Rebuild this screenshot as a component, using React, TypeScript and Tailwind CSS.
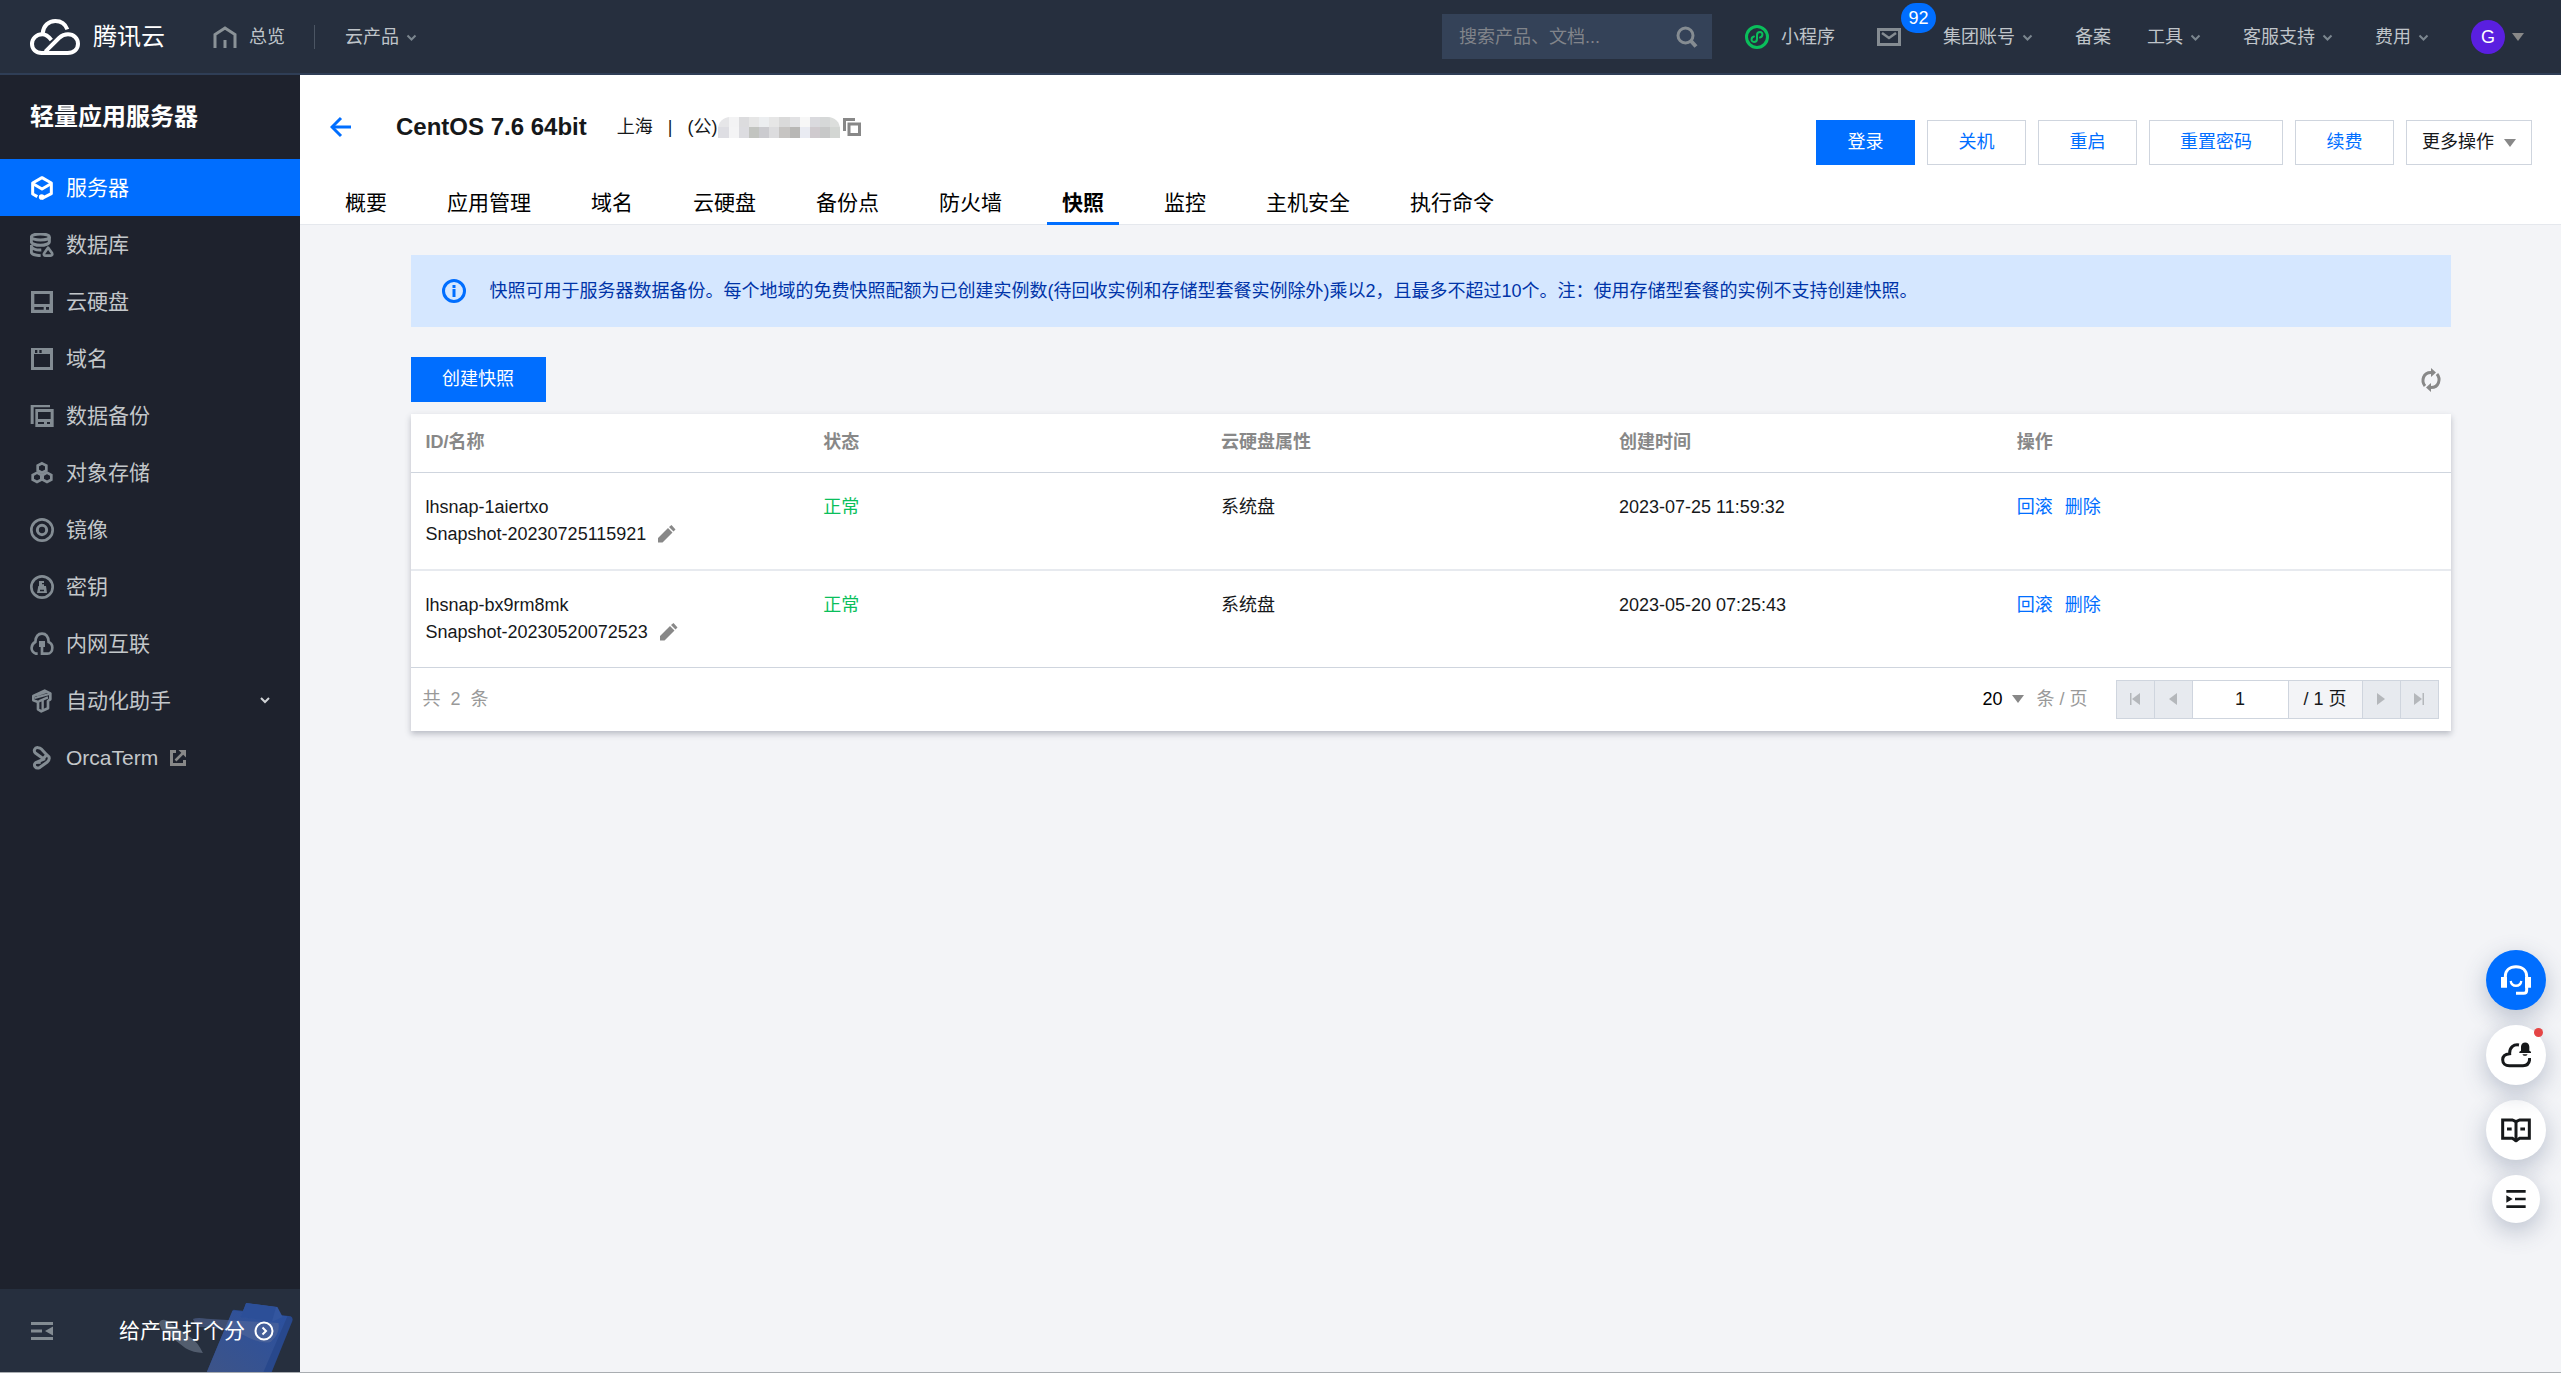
import React, { useState } from "react";

const BLUE = "#006eff";

function Chevron() {
  return (
    <svg width="24" height="24" viewBox="0 0 24 24" fill="none" stroke="#7b868f" strokeWidth="2" aria-hidden="true">
      <path d="M8.500 10.500 L12.500 14.500 L16.500 10.500" />
    </svg>
  );
}

function Triangle({ size = 12 }: { size?: number }) {
  return (
    <svg width={size} height="8" viewBox="0 0 12 8" aria-hidden="true">
      <path d="M0 0H12L6 8Z" fill="#888" />
    </svg>
  );
}

function CloudLogo() {
  return (
    <svg width="50" height="36" viewBox="0 0 150 108" fill="none" stroke="#fff" strokeWidth="12" aria-hidden="true">
      <path d="M38 43C40 20 56 6 76 6C93 6 106 15 112 31" />
      <path d="M64 63C56 53 48 46 37 46C19 46 6 59 6 75C6 91 18 102 35 102H113C131 102 144 91 144 74C144 58 131 46 114 46C103 46 95 50 87 57L46 98" />
    </svg>
  );
}

const icons: Record<string, React.ReactNode> = {
  server: (
    <g fill="none" stroke="currentColor" strokeWidth="9" strokeLinejoin="round">
      <path d="M22 62L8 54V21L36 5L64 21V53L36 67" />
      <path d="M9 23L36 39L63 23" />
      <circle cx="35" cy="63" r="5" fill="currentColor" strokeWidth="7" />
    </g>
  ),
  database: (
    <g fill="none" stroke="currentColor" strokeWidth="9">
      <ellipse cx="31" cy="12" rx="27" ry="9" />
      <path d="M4 12V26C4 32 16 37 31 37S58 32 58 26V12" />
      <path d="M4 36V58C4 63 14 67 32 68M5 42C10 49 20 52 34 51" />
      <path d="M54 44L66 60C68 65 66 68 62 68H47C42 68 40 64 43 60Z" strokeWidth="8" strokeLinejoin="round" />
    </g>
  ),
  disk: (
    <g fill="currentColor">
      <path fillRule="evenodd" d="M3 3H69V69H3ZM13 12V42H59V12ZM13 51V59H41V51ZM48 51V59H57V51Z" />
    </g>
  ),
  domain: (
    <path fill="currentColor" fillRule="evenodd" d="M3 3H69V69H3ZM12 21V60H60V21ZM15 9V18H22V9ZM28 9V18H35V9Z" />
  ),
  backup: (
    <g fill="currentColor">
      <path d="M2 3H60V10H11V60H2Z" />
      <path fillRule="evenodd" d="M16 15H71V69H16ZM24 24V45H62V24ZM24 54V60H42V54ZM51 54V60H60V54Z" />
    </g>
  ),
  storage: (
    <g fill="none" stroke="currentColor" strokeWidth="8">
      <path d="M36 7L49 14V28L36 35L23 28V14Z" />
      <path d="M21 35L34 42V56L21 63L8 56V42Z" />
      <path d="M51 35L64 42V56L51 63L38 56V42Z" />
    </g>
  ),
  image: (
    <g fill="none" stroke="currentColor">
      <circle cx="36" cy="36" r="32" strokeWidth="8" />
      <circle cx="36" cy="36" r="14" strokeWidth="9" />
    </g>
  ),
  key: (
    <g>
      <circle cx="36" cy="36" r="32" fill="none" stroke="currentColor" strokeWidth="8" />
      <path fill="currentColor" fillRule="evenodd" d="M27 18H42V24H36V28H42V33H48L51 54H21L25 33H27ZM30 44V49H42V44Z" />
    </g>
  ),
  network: (
    <g fill="none" stroke="currentColor" strokeWidth="8">
      <path d="M23 65H18C9 62 4 55 5 46C6 38 10 33 16 30C17 14 25 5 36 5S55 14 56 30C63 33 67 39 67 47C67 57 61 65 52 65H36V42" />
      <path d="M27 27H45V45H27Z" fill="currentColor" stroke="none" />
    </g>
  ),
  assistant: (
    <g fill="none" stroke="currentColor" strokeWidth="8" strokeLinejoin="round">
      <path d="M10 21L44 5L61 13V31L54 36V58L34 67L24 61V39L10 34Z" />
      <path d="M14 27L58 15M20 19L50 9" strokeWidth="6" />
      <path d="M26 37L54 25M38 34V62" strokeWidth="7" />
    </g>
  ),
  orca: (
    <g fill="none" stroke="currentColor" strokeWidth="9" strokeLinejoin="round">
      <path d="M25 5C14 3 9 15 17 22L40 38L50 26L34 9C31 6 28 5 25 5Z" />
      <path d="M50 26C60 32 60 40 52 48L30 64C17 71 8 57 17 50L45 38" />
      <path d="M18 50H32" strokeWidth="7" />
    </g>
  ),
};

const menu = [
  ["server", "服务器"],
  ["database", "数据库"],
  ["disk", "云硬盘"],
  ["domain", "域名"],
  ["backup", "数据备份"],
  ["storage", "对象存储"],
  ["image", "镜像"],
  ["key", "密钥"],
  ["network", "内网互联"],
  ["assistant", "自动化助手"],
  ["orca", "OrcaTerm"],
];

function TopBar() {
  return (
    <header className="flex h-[75px] shrink-0 items-center border-b-2 border-[#2f3e56] bg-[#262f3e] text-[18px] leading-6 text-[#bfc4c9]">
      <a href="#home" className="ml-[30px] flex items-center gap-[13px] text-2xl text-white">
        <CloudLogo />
        腾讯云
      </a>
      <a href="#overview" className="ml-12 flex items-center gap-3">
        <svg width="24" height="24" viewBox="0 0 24 24" fill="none" stroke="#8a9297" strokeWidth="3" aria-hidden="true">
          <path d="M2 23V9.500L12 3L22 9.500V23" />
          <path d="M12 15V23" />
        </svg>
        总览
      </a>
      <span className="ml-[29px] h-6 w-px bg-[#4b5563]" />
      <button className="ml-[30px] flex items-center">
        云产品
        <Chevron />
      </button>

      <label className="ml-auto flex h-[45px] w-[270px] items-center bg-[#344258] pr-3.5 pl-[17px]">
        <input
          type="search"
          aria-label="搜索产品、文档"
          placeholder="搜索产品、文档..."
          className="min-w-0 flex-1 bg-transparent outline-none placeholder:text-[#81848a]"
        />
        <svg width="22" height="22" viewBox="0 0 22 22" fill="none" stroke="#858c92" aria-hidden="true">
          <circle cx="9.500" cy="9.500" r="7.500" strokeWidth="3" />
          <path d="M15 15L20 20.500" strokeWidth="4" />
        </svg>
      </label>
      <a href="#mini" className="ml-[33px] flex items-center gap-3">
        <svg width="24" height="24" viewBox="0 0 24 24" fill="none" stroke="#0abf5b" aria-hidden="true">
          <circle cx="12" cy="12" r="10.500" strokeWidth="3" />
          <path
            d="M9 11.500C6 12 5.500 17 9 17C11 17 12 15.500 12 14V10C12 8.500 13 7 15 7C18.500 7 18 12 15 12.500"
            strokeWidth="2"
            strokeLinecap="round"
          />
        </svg>
        小程序
      </a>
      <a href="#messages" aria-label="消息" className="relative ml-[42px]">
        <svg width="24" height="18" viewBox="0 0 24 18" fill="none" stroke="#858c92" strokeWidth="3" aria-hidden="true">
          <path d="M1.500 1.500H22.500V16.500H1.500Z" />
          <path d="M5 5L12 10L19 5" strokeWidth="2.500" />
        </svg>
        <span className="absolute -top-[25px] left-6 flex h-[30px] w-[35px] items-center justify-center rounded-full bg-[#006eff] text-white">
          92
        </span>
      </a>
      <nav className="ml-[42px] flex items-center gap-9">
        <button className="flex items-center">集团账号<Chevron /></button>
        <a href="#beian">备案</a>
        <button className="flex items-center">工具<Chevron /></button>
        <button className="flex items-center">客服支持<Chevron /></button>
        <button className="flex items-center">费用<Chevron /></button>
        <button className="mr-[37px] flex items-center gap-[7px]">
          <span className="flex size-[34px] items-center justify-center rounded-full bg-[#5a1fe0] text-white">G</span>
          <Triangle />
        </button>
      </nav>
    </header>
  );
}

function Sidebar() {
  return (
    <aside className="flex w-[300px] shrink-0 flex-col bg-[#1e222d]">
      <h2 className="flex h-[84px] items-center pl-[30px] text-2xl font-bold text-white">轻量应用服务器</h2>
      <nav>
        {menu.map(([icon, label], i) => (
          <a
            key={icon}
            href={"#" + icon}
            className={
              "flex h-[57px] items-center pl-[30px] text-[21px] leading-8 " +
              (i === 0 ? "bg-[#006eff] text-white" : "text-[#c3c7ca]")
            }
          >
            <svg
              width="24"
              height="24"
              viewBox="0 0 72 72"
              aria-hidden="true"
              className={i === 0 ? "mr-3 text-white" : "mr-3 text-[#838c93]"}
            >
              {icons[icon]}
            </svg>
            {label}
            {icon === "assistant" && (
              <svg width="12" height="10" viewBox="0 0 12 10" fill="none" stroke="#d0d3d6" strokeWidth="2" className="mr-[29px] ml-auto" aria-hidden="true">
                <path d="M2 2L6 6L10 2" />
              </svg>
            )}
            {icon === "orca" && (
              <svg width="16" height="16" viewBox="0 0 16 16" fill="none" stroke="#888" strokeWidth="3" className="ml-3" aria-hidden="true">
                <path d="M6 1.500H1.500V14.500H14.500V10" />
                <path d="M5.500 10.500L13 3" strokeWidth="2.500" />
                <path d="M8.500 0H16V7.500Z" fill="#888" stroke="none" />
              </svg>
            )}
          </a>
        ))}
      </nav>
      <div className="relative mt-auto flex h-[83px] items-center bg-[#262f3e] pl-[31px]">
        <svg width="143" height="83" viewBox="470 58 430 249" className="absolute right-0 bottom-0" aria-hidden="true">
          <defs>
            <linearGradient id="board" x1="0" y1="1" x2="1" y2="0">
              <stop offset="0" stopColor="#3d5488" />
              <stop offset="1" stopColor="#2a50a0" />
            </linearGradient>
          </defs>
          <path d="M476 160Q484 144 502 154L572 204Q592 216 608 250Q580 250 556 236L484 180Z" fill="#525d6e" />
          <path d="M700 120L872 140Q880 144 877 154L815 307H620L660 210Z" fill="#28488c" />
          <path d="M697 122L862 140L790 307H620Z" fill="url(#board)" />
          <path d="M738 100L832 112L848 142L820 155L722 142Z" fill="#33569f" />
          <path d="M738 100L828 112L816 154L722 142Z" fill="#2c4f98" />
          <path d="M578 148Q590 142 620 147L835 160Q842 190 812 217Q780 225 730 196Q650 170 590 172Z" fill="#56699a" opacity="0.55" />
        </svg>
        <button aria-label="收起菜单">
          <svg width="22" height="18" viewBox="0 0 22 18" fill="#838c93" aria-hidden="true">
            <path d="M0 0H22V3H0ZM0 15H22V18H0ZM0 7.500H11V10.500H0ZM22 4.500V13.500L14 9Z" />
          </svg>
        </button>
        <a href="#rate" className="relative mr-[26px] ml-auto flex items-center gap-[9px] text-[21px] leading-8 text-white">
          给产品打个分
          <svg width="20" height="20" viewBox="0 0 20 20" fill="none" stroke="#fff" strokeWidth="2" aria-hidden="true">
            <circle cx="10" cy="10" r="8.500" />
            <path d="M8.500 6.500L12 10L8.500 13.500" />
          </svg>
        </a>
      </div>
    </aside>
  );
}

const tabs = ["概要", "应用管理", "域名", "云硬盘", "备份点", "防火墙", "快照", "监控", "主机安全", "执行命令"];

const mosaic = [
  ["#e6e6e8", "#f3f3f4", "#dcdcde", "#e6e6e6", "#eceef0", "#e6e6e6", "#dadada", "#e2e2e4", "#f7f7f7", "#dadade", "#d6d8d8", "#dcdedc"],
  ["#dedee3", "#f4f4f5", "#dcdce0", "#c2c4c0", "#cbcbcf", "#dcdcde", "#c6c4c2", "#b8b7b5", "#e9ebf2", "#cfcace", "#c7c8c8", "#d3d6d3"],
];

function PageHead() {
  const [active, setActive] = useState("快照");
  const outline = "h-[45px] min-w-[99px] border border-[#cfd5de] bg-white px-[30px] text-[#006eff]";
  return (
    <section className="flex h-[150px] items-start justify-between border-b border-[#e5e8ed] bg-white">
      <div className="flex h-[150px] flex-col justify-between pl-[30px]">
        <div className="mt-[34px] flex h-9 items-center">
          <a href="#back" aria-label="返回">
            <svg width="24" height="24" viewBox="0 0 24 24" fill="none" stroke={BLUE} strokeWidth="3" aria-hidden="true">
              <path d="M21 12H2" />
              <path d="M11 3L2 12L11 21" />
            </svg>
          </a>
          <h1 className="ml-[42px] text-2xl font-bold text-[#16181a]">CentOS 7.6 64bit</h1>
          <div className="ml-[30px] flex items-center text-[18px]">
            上海
            <span className="mx-[15px]">|</span>
            (公)
            <span className="ml-px grid h-[21px] w-[122px] grid-cols-12 overflow-hidden rounded-t-xl">
              {mosaic.flat().map((c, i) => (
                <span key={i} style={{ backgroundColor: c }} />
              ))}
            </span>
            <button aria-label="复制" className="ml-[3px]">
              <svg width="18" height="18" viewBox="0 0 18 18" fill="none" stroke="#888" aria-hidden="true">
                <path d="M1.500 13V1.500H12" strokeWidth="3" />
                <path d="M6 6H16.500V16.500H6Z" strokeWidth="3" />
              </svg>
            </button>
          </div>
        </div>
        <nav className="flex gap-[30px] text-[21px] leading-8 text-black">
          {tabs.map((t) => (
            <button
              key={t}
              onClick={() => setActive(t)}
              className={
                "h-[42px] border-b-3 px-[15px] whitespace-nowrap " +
                (t === active ? "border-[#006eff] font-bold" : "border-transparent")
              }
            >
              {t}
            </button>
          ))}
        </nav>
      </div>
      <div className="mt-[45px] mr-[29px] flex gap-3 text-[18px]">
        <button className="h-[45px] min-w-[99px] bg-[#006eff] text-white">登录</button>
        <button className={outline}>关机</button>
        <button className={outline}>重启</button>
        <button className={outline}>重置密码</button>
        <button className={outline}>续费</button>
        <button className="flex h-[45px] items-center gap-2.5 border border-[#cfd5de] bg-white px-[15px]">
          更多操作
          <Triangle />
        </button>
      </div>
    </section>
  );
}

const rows = [
  { id: "lhsnap-1aiertxo", name: "Snapshot-20230725115921", time: "2023-07-25 11:59:32" },
  { id: "lhsnap-bx9rm8mk", name: "Snapshot-20230520072523", time: "2023-05-20 07:25:43" },
];

function PageArrow({ flip, end, label }: { flip?: boolean; end?: boolean; label: string }) {
  return (
    <button aria-label={label} disabled className="flex w-[37px] items-center justify-center bg-[#e7eaef]">
      <svg width="12" height="14" viewBox="0 0 12 14" fill="#b4b7bb" className={flip ? "rotate-180" : ""} aria-hidden="true">
        <path d={end ? "M11 1V13L3 7Z" : "M10 1V13L2 7Z"} />
        {end && <path d="M1 1H2.500V13H1Z" />}
      </svg>
    </button>
  );
}

function SnapshotTable() {
  return (
    <div className="mt-3 bg-white shadow-[0_3px_6px_rgba(54,58,80,0.3)]">
      <table className="w-full table-fixed border-collapse text-left">
        <thead>
          <tr className="h-[58px] border-b border-[#cfd5de] text-[#888]">
            <th className="w-[19.5%] px-[15px] font-bold">ID/名称</th>
            <th className="w-[19.5%] px-[15px] font-bold">状态</th>
            <th className="w-[19.5%] px-[15px] font-bold">云硬盘属性</th>
            <th className="w-[19.5%] px-[15px] font-bold">创建时间</th>
            <th className="px-[15px] font-bold">操作</th>
          </tr>
        </thead>
        <tbody>
          {rows.map((r) => (
            <tr key={r.id} className="border-b-2 border-[#e7eaef] align-top last:border-b last:border-[#cfd5de]">
              <td className="px-[15px] py-[21px]">
                <div>{r.id}</div>
                <div className="flex items-center gap-3">
                  {r.name}
                  <button aria-label="编辑名称">
                    <svg width="18" height="18" viewBox="0 0 18 18" fill="#888" aria-hidden="true">
                      <path d="M0 13L10 3L14.500 7.500L4.500 17.500H0ZM11 2L13.500 0L17.500 4.500L15.500 6.500Z" />
                    </svg>
                  </button>
                </div>
              </td>
              <td className="px-[15px] py-[21px] text-[#0abf5b]">正常</td>
              <td className="px-[15px] py-[21px]">系统盘</td>
              <td className="px-[15px] py-[21px]">{r.time}</td>
              <td className="px-[15px] py-[21px] text-[#006eff]">
                <div className="flex gap-3">
                  <button>回滚</button>
                  <button>删除</button>
                </div>
              </td>
            </tr>
          ))}
        </tbody>
      </table>
      <div className="flex h-[63px] items-center px-3">
        <span className="text-[#999]">共&nbsp; 2 &nbsp;条</span>
        <label className="ml-auto flex items-center text-[#999]">
          <select aria-label="每页条数" defaultValue="20" className="w-[30px] appearance-none bg-transparent text-black outline-none">
            <option>20</option>
          </select>
          <Triangle />
          <span className="ml-3">条 / 页</span>
        </label>
        <div className="ml-7 flex h-[39px] gap-px border border-[#cfd5de] bg-[#cfd5de]">
          <PageArrow label="第一页" end />
          <PageArrow label="上一页" />
          <input aria-label="页码" defaultValue="1" className="w-[95px] bg-white text-center outline-none" />
          <span className="flex w-[73px] items-center justify-center bg-[#f3f4f7]">/ 1 页</span>
          <PageArrow label="下一页" flip />
          <PageArrow label="最后一页" flip end />
        </div>
      </div>
    </div>
  );
}

function FloatingTools() {
  const round = "flex size-[60px] items-center justify-center rounded-full bg-white shadow-[0_8px_24px_rgba(54,72,110,0.3)]";
  return (
    <div className="fixed right-[15px] bottom-[150px] flex flex-col items-center gap-[15px]">
      <button aria-label="在线客服" className="flex size-[60px] items-center justify-center rounded-full bg-[#006eff] shadow-[0_8px_24px_rgba(54,72,110,0.3)]">
        <svg width="30" height="30" viewBox="0 0 90 90" fill="none" stroke="#fff" strokeWidth="9" aria-hidden="true">
          <path d="M13 40V34C13 16 26 5 45 5S77 16 77 34V76C77 82 74 85 68 85H45" />
          <path d="M29 48C32 67 58 67 61 48" strokeWidth="7" />
          <path d="M0 36H18V68H0ZM72 36H90V68H72Z" fill="#fff" stroke="none" />
        </svg>
      </button>
      <button aria-label="云通知" className={"relative " + round}>
        <svg width="30" height="26" viewBox="0 0 90 78" fill="none" stroke="#16181a" strokeWidth="9" aria-hidden="true">
          <path d="M54 9C38 6 25 17 26 35C12 36 5 43 5 53C5 64 13 71 25 71H66C78 71 86 64 86 48" />
          <path d="M55 29V33H90V29L85 26V14C85 -3 60 -3 60 14V26ZM64 37H80L76 41H68Z" fill="#16181a" stroke="none" />
        </svg>
        <span className="absolute top-[3px] right-[3px] size-[9px] rounded-full bg-[#e54545]" />
      </button>
      <button aria-label="文档" className={round}>
        <svg width="30" height="26" viewBox="0 0 90 78" fill="none" stroke="#16181a" strokeWidth="9" aria-hidden="true">
          <path d="M45 14L34 9H5V64H34L45 71L56 64H85V9H56Z" />
          <path d="M45 13V74" />
          <path d="M18 36H32M58 36H72" />
        </svg>
      </button>
      <button aria-label="收起" className="flex size-12 items-center justify-center rounded-full bg-white shadow-[0_8px_24px_rgba(54,72,110,0.3)]">
        <svg width="20" height="18" viewBox="0 0 60 54" fill="#16181a" aria-hidden="true">
          <path d="M1 0H59V8H1ZM1 46H59V54H1ZM27 23H59V31H27ZM1 16L20 27L1 38Z" />
        </svg>
      </button>
    </div>
  );
}

export default function App() {
  return (
    <div className="flex min-h-screen flex-col border-b border-[#a9adb1] bg-[#f3f4f7] font-['Liberation_Sans','Noto_Sans_CJK_SC',sans-serif] text-[18px] leading-[27px] text-[#16181a]">
      <TopBar />
      <div className="flex flex-1">
        <Sidebar />
        <main className="min-w-0 flex-1">
          <PageHead />
          <div className="mx-auto max-w-[2040px] pt-[30px]">
            <div className="flex min-h-[72px] items-center gap-6 bg-[#d5e7ff] px-[31px] text-[#0034a8]">
              <svg width="24" height="24" viewBox="0 0 24 24" fill="none" stroke={BLUE} strokeWidth="3" className="shrink-0" aria-hidden="true">
                <circle cx="12" cy="12" r="10.500" />
                <path d="M12 10V18M12 6V9" />
              </svg>
              <p>
                快照可用于服务器数据备份。每个地域的免费快照配额为已创建实例数(待回收实例和存储型套餐实例除外)乘以2，且最多不超过10个。注：使用存储型套餐的实例不支持创建快照。
              </p>
            </div>
            <div className="mt-[30px] flex items-center justify-between">
              <button className="h-[45px] w-[135px] bg-[#006eff] text-white">创建快照</button>
              <button aria-label="刷新" className="mr-2">
                <svg width="24" height="24" viewBox="0 0 24 24" fill="none" stroke="#888" strokeWidth="3" aria-hidden="true">
                  <path d="M6 18C2 13 4 4.500 12 4.500" />
                  <path d="M18 6C22 11 20 19.500 12 19.500" />
                  <path d="M12 0L17 4.500L12 9ZM12 15L7 19.500L12 24Z" fill="#888" stroke="none" />
                </svg>
              </button>
            </div>
            <SnapshotTable />
          </div>
        </main>
      </div>
      <FloatingTools />
    </div>
  );
}
